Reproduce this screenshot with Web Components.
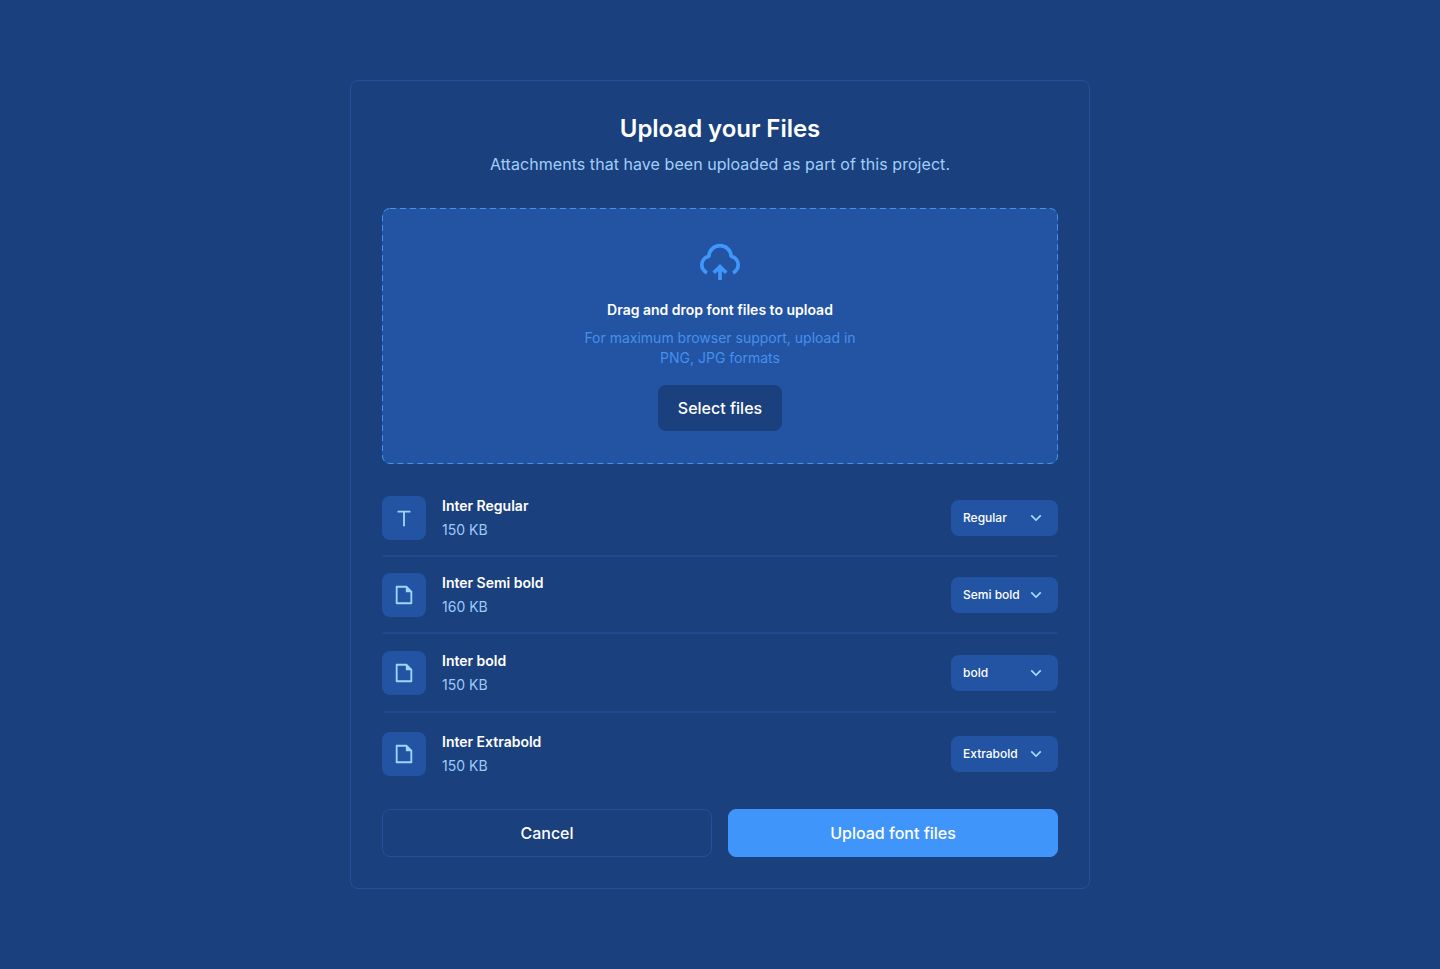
<!DOCTYPE html>
<html lang="en">
<head>
<meta charset="utf-8">
<title>Upload your Files</title>
<style>
html,body{margin:0;height:100%}
body{background:#1a407d;color:#fff;font-family:Inter,sans-serif;display:flex;justify-content:center;align-items:flex-start;padding-top:80px;box-sizing:border-box;overflow:hidden}
</style>
</head>
<body>
<upload-card heading="Upload your Files" description="Attachments that have been uploaded as part of this project.">
  <drop-zone></drop-zone>
  <file-list>
    <file-row icon="text" name="Inter Regular" size="150 KB" weight="Regular" style="--bottom:15px"></file-row>
    <file-row icon="file" name="Inter Semi bold" size="160 KB" weight="Semi bold" style="--top:15.5px;--bottom:15.5px"></file-row>
    <file-row icon="file" name="Inter bold" size="150 KB" weight="bold" style="--top:17px;--bottom:16px"></file-row>
    <file-row icon="file" name="Inter Extrabold" size="150 KB" weight="Extrabold" style="--top:19px" last></file-row>
  </file-list>
  <action-button slot="actions">Cancel</action-button>
  <action-button slot="actions" primary>Upload font files</action-button>
</upload-card>
<script>
const icons = {
  text: 'M13 6V21H11V6H5V4H19V6H13Z',
  file: 'M21 8V20.993A1 1 0 0 1 20.007 22H3.993A.993.993 0 0 1 3 21.008V2.992C3 2.455 3.449 2 4.002 2H14.997L21 8ZM19 9H14V4H5V20H19V9Z',
  chevron: 'M12 13.172L16.95 8.222L18.364 9.636L12 16L5.636 9.636L7.05 8.222L12 13.172Z'
};
class Base extends HTMLElement {
  connectedCallback() {
    if (!this.shadowRoot) this.attachShadow({mode: 'open'}).innerHTML = this.render();
  }
  attr(n) { return this.getAttribute(n) || ''; }
}
customElements.define('ui-icon', class extends Base {
  render() { return `<style>:host{display:block;width:22px;height:22px;color:#9ed6fb}svg{display:block;width:100%;height:100%}</style>
    <svg viewBox="0 0 24 24" fill="currentColor"><path d="${icons[this.attr('name')]}"/></svg>`; }
});
customElements.define('upload-card', class extends Base {
  render() { return `<style>
    :host{display:block;box-sizing:border-box;width:740px;height:809px;border:1px solid #25509a;border-radius:8px;padding:31px}
    header{text-align:center;height:96px}
    h1{margin:0;padding-top:1px;font-size:24px;line-height:32px;font-weight:600;letter-spacing:-.05px}
    p{margin:7px 0 0;font-size:16px;line-height:24px;color:#a1cffb;letter-spacing:.055px}
    footer{display:grid;grid-template-columns:1fr 1fr;gap:16px;margin-top:33.2px}
    </style><header><h1>${this.attr('heading')}</h1><p>${this.attr('description')}</p></header>
    <slot></slot><footer><slot name="actions"></slot></footer>`; }
});
customElements.define('drop-zone', class extends Base {
  render() { return `<style>
    :host{display:flex;flex-direction:column;align-items:center;box-sizing:border-box;height:256px;position:relative;background:#2254a3;border-radius:8px;padding-top:32px}
    .edge{position:absolute;inset:0;width:100%;height:100%}
    .cloud{width:44px;height:44px;color:#4096fa}
    strong{margin-top:14px;font-size:14px;line-height:24px;font-weight:600}
    p{margin:6px 0 0;width:284px;text-align:center;font-size:14px;line-height:20px;color:#4590ec}
    button{margin-top:17px;width:124px;height:46px;padding:0;border:0;border-radius:8px;background:#1a407d;color:#fff;font:500 16px/24px Inter,sans-serif}
    </style>
    <svg class="edge" viewBox="0 0 676 256"><rect x=".5" y=".5" width="675" height="255" rx="7.5" fill="none" stroke="#4793ea" stroke-dasharray="6 4"/></svg>
    <svg class="cloud" viewBox="0 0 44 44" fill="none" stroke="currentColor" stroke-width="3.7">
      <path stroke-linejoin="bevel" d="M9 32.8C5.6 31 3.8 28 3.8 24.8C3.8 20.6 6.6 17.3 10.9 16.4A11.1 10.7 0 0 1 33.1 16.4C37.4 17.3 40.2 20.6 40.2 24.8C40.2 28 38.4 31 35 32.8"/>
      <path d="M22 40V27.5M15.8 32.7L22 26.5L28.2 32.7"/>
    </svg>
    <strong>Drag and drop font files to upload</strong>
    <p>For maximum browser support, upload in PNG, JPG formats</p>
    <button>Select files</button>`; }
});
customElements.define('file-list', class extends Base {
  render() { return `<style>:host{display:block;padding-top:32px}</style><slot></slot>`; }
});
customElements.define('weight-select', class extends Base {
  render() { return `<style>
    :host{display:flex;align-items:center;justify-content:space-between;box-sizing:border-box;width:107px;height:36px;padding:0 12px;border-radius:8px;background:#2254a3;font-size:12px;line-height:16px;font-weight:500}
    ui-icon{width:20px;height:20px;color:#a5dcff}
    </style><slot></slot><ui-icon name="chevron"></ui-icon>`; }
});
customElements.define('file-row', class extends Base {
  render() { return `<style>
    :host{display:block;padding:var(--top,0) 0 var(--bottom,0)}
    :host(:not([last]))::after{content:"";display:block;height:2px;margin:var(--bottom,0) 1px calc(var(--bottom,0px)*-1);background:#20498f}
    .row{display:flex;align-items:center;height:44px}
    .tile{display:flex;align-items:center;justify-content:center;width:44px;height:44px;border-radius:8px;background:#2254a3}
    .info{flex:1;margin-left:16px;font-size:14px;line-height:24px}
    .name{font-weight:600}.size{color:#9dcaf8}
    </style><div class="row"><div class="tile"><ui-icon name="${this.attr('icon')}"></ui-icon></div>
    <div class="info"><div class="name">${this.attr('name')}</div><div class="size">${this.attr('size')}</div></div>
    <weight-select>${this.attr('weight')}</weight-select></div>`; }
});
customElements.define('action-button', class extends Base {
  render() { return `<style>
    :host{display:block}
    button{display:block;width:100%;height:48px;padding:0;border:1px solid #25509a;border-radius:8px;background:none;color:#fff;font:500 16px/24px Inter,sans-serif}
    :host([primary]) button{background:#4095fa;border-color:#4095fa}
    </style><button><slot></slot></button>`; }
});
</script>
</body>
</html>
